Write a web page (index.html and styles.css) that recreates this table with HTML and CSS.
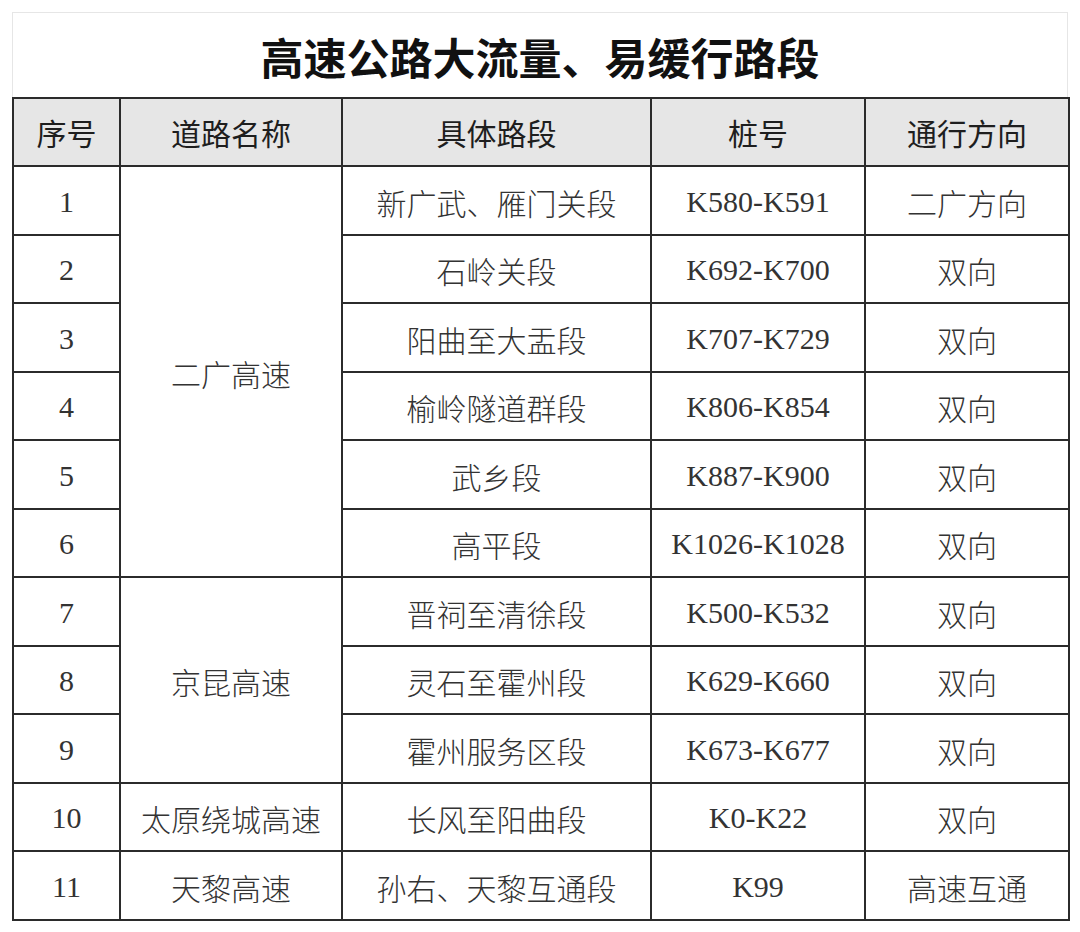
FILE: index.html
```html
<!DOCTYPE html>
<html lang="zh-CN">
<head>
<meta charset="utf-8">
<title>高速公路大流量、易缓行路段</title>
<link rel="stylesheet" href="styles.css">
</head>
<body>
<div class="sheet">
  <div class="title">高速公路大流量、易缓行路段</div>
  <table class="grid">
    <colgroup>
      <col class="c1"><col class="c2"><col class="c3"><col class="c4"><col class="c5">
    </colgroup>
    <thead>
      <tr><th>序号</th><th>道路名称</th><th>具体路段</th><th>桩号</th><th>通行方向</th></tr>
    </thead>
    <tbody>
      <tr><td>1</td><td rowspan="6">二广高速</td><td>新广武、雁门关段</td><td>K580-K591</td><td>二广方向</td></tr>
      <tr><td>2</td><td>石岭关段</td><td>K692-K700</td><td>双向</td></tr>
      <tr><td>3</td><td>阳曲至大盂段</td><td>K707-K729</td><td>双向</td></tr>
      <tr><td>4</td><td>榆岭隧道群段</td><td>K806-K854</td><td>双向</td></tr>
      <tr><td>5</td><td>武乡段</td><td>K887-K900</td><td>双向</td></tr>
      <tr><td>6</td><td>高平段</td><td>K1026-K1028</td><td>双向</td></tr>
      <tr><td>7</td><td rowspan="3">京昆高速</td><td>晋祠至清徐段</td><td>K500-K532</td><td>双向</td></tr>
      <tr><td>8</td><td>灵石至霍州段</td><td>K629-K660</td><td>双向</td></tr>
      <tr><td>9</td><td>霍州服务区段</td><td>K673-K677</td><td>双向</td></tr>
      <tr><td>10</td><td>太原绕城高速</td><td>长风至阳曲段</td><td>K0-K22</td><td>双向</td></tr>
      <tr><td>11</td><td>天黎高速</td><td>孙右、天黎互通段</td><td>K99</td><td>高速互通</td></tr>
    </tbody>
  </table>
</div>
</body>
</html>
```

FILE: styles.css
```css
html, body {
  margin: 0;
  padding: 0;
  background: #ffffff;
}
body {
  padding: 12px;
}
.sheet {
  width: 1056px;
}
.title {
  box-sizing: border-box;
  height: 85px;
  border: 1px solid #e6e6e6;
  border-bottom: none;
  display: flex;
  align-items: center;
  justify-content: center;
  font-family: "Liberation Serif", "Noto Sans CJK SC", serif;
  font-weight: 700;
  font-size: 43px;
  color: #111111;
  padding-top: 2px;
}
.grid {
  width: 1056px;
  border-collapse: collapse;
  table-layout: fixed;
  border: 2px solid #2b2b2b;
}
.c1 { width: 107px; }
.c2 { width: 222px; }
.c3 { width: 309px; }
.c4 { width: 214px; }
.c5 { width: 204px; }
.grid th, .grid td {
  border: 2px solid #2b2b2b;
  text-align: center;
  vertical-align: middle;
  padding: 0;
}
.grid th {
  height: 66px;
  background: #e6e6e6;
  font-family: "Noto Sans CJK SC", sans-serif;
  font-weight: 400;
  font-size: 30px;
  color: #1e1e1e;
}
.grid td {
  height: 63.5px;
  font-family: "Liberation Serif", "Noto Sans CJK SC", serif;
  font-weight: 300;
  font-size: 30px;
  color: #333333;
  padding-top: 3px;
}
```
